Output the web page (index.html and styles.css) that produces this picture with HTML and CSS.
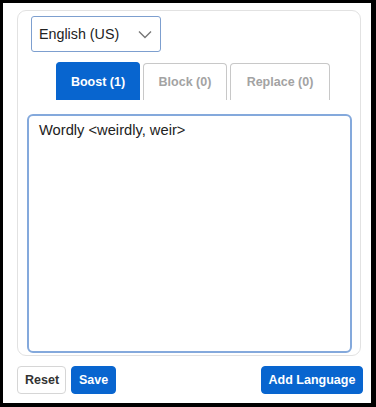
FILE: index.html
```html
<!DOCTYPE html>
<html lang="en">
<head>
  <meta charset="UTF-8" />
  <title>Custom Vocabulary</title>
  <link rel="stylesheet" href="styles.css">
</head>
<body>
  <div class="frame">
    <div class="card">
      <div class="lang-select">
        <span>English (US)</span>
        <svg width="14" height="9" viewBox="0 0 14 9"><path d="M1 1.5 L7 7.5 L13 1.5" fill="none" stroke="#777" stroke-width="1.4"/></svg>
      </div>

      <div class="tabs">
        <button class="tab active">Boost (1)</button>
        <button class="tab">Block (0)</button>
        <button class="tab tab-wide">Replace (0)</button>
      </div>

      <div class="word-box">Wordly &lt;weirdly, weir&gt;</div>
    </div>

    <div class="actions">
      <button class="btn btn-plain">Reset</button>
      <button class="btn btn-blue">Save</button>
      <button class="btn btn-blue btn-right">Add Language</button>
    </div>
  </div>
</body>
</html>
```

FILE: styles.css
```css
html {
  background: #000;
}
body {
  margin: 0;
  padding: 3px 5px 4px 3px;
  font-family: "Liberation Sans", Arial, sans-serif;
}
.frame {
  background: #fff;
  height: 400px;
  padding: 7px 10px 0 14px;
  box-sizing: border-box;
}
.card {
  border: 1px solid #e2e2e2;
  border-radius: 9px;
  height: 346px;
  box-sizing: border-box;
  padding: 5px 8px 0 9px;
}
.lang-select {
  width: 130px;
  height: 36px;
  margin-left: 4px;
  box-sizing: border-box;
  border: 1px solid #7d9fcf;
  border-radius: 3px;
  display: flex;
  align-items: center;
  justify-content: space-between;
  padding: 0 8px 0 7px;
  font-size: 14.3px;
  color: #222;
}
.lang-select svg {
  margin-top: 1px;
}
.tabs {
  display: flex;
  gap: 3px;
  margin: 10px 0 0 29px;
  align-items: flex-end;
}
.tab {
  width: 84px;
  height: 37px;
  border: 1px solid #c8c8c8;
  border-bottom: none;
  border-radius: 4px 4px 0 0;
  background: #fff;
  color: #a3a3a3;
  font-family: inherit;
  font-weight: bold;
  font-size: 12.5px;
  padding: 0;
}
.tab.active {
  height: 38px;
  background: #0865cf;
  border-color: #0865cf;
  color: #fff;
}
.tab-wide {
  width: 100px;
}
.word-box {
  margin-top: 14px;
  height: 239px;
  box-sizing: border-box;
  border: 2px solid #84a9dc;
  border-radius: 6px;
  padding: 6px 10px;
  font-size: 14.7px;
  color: #222;
}
.actions {
  display: flex;
  gap: 5px;
  margin-top: 10px;
}
.btn {
  height: 28px;
  border-radius: 4px;
  font-family: inherit;
  font-weight: bold;
  font-size: 12.5px;
  padding: 0 7px;
  white-space: nowrap;
}
.btn-plain {
  background: #fff;
  border: 1px solid #d6d6d6;
  color: #333;
  width: 49px;
}
.btn-blue {
  background: #0865cf;
  border: 1px solid #0865cf;
  color: #fff;
}
.btn-right {
  margin-left: auto;
  margin-right: -2px;
  width: 102px;
  padding: 0;
}
```
